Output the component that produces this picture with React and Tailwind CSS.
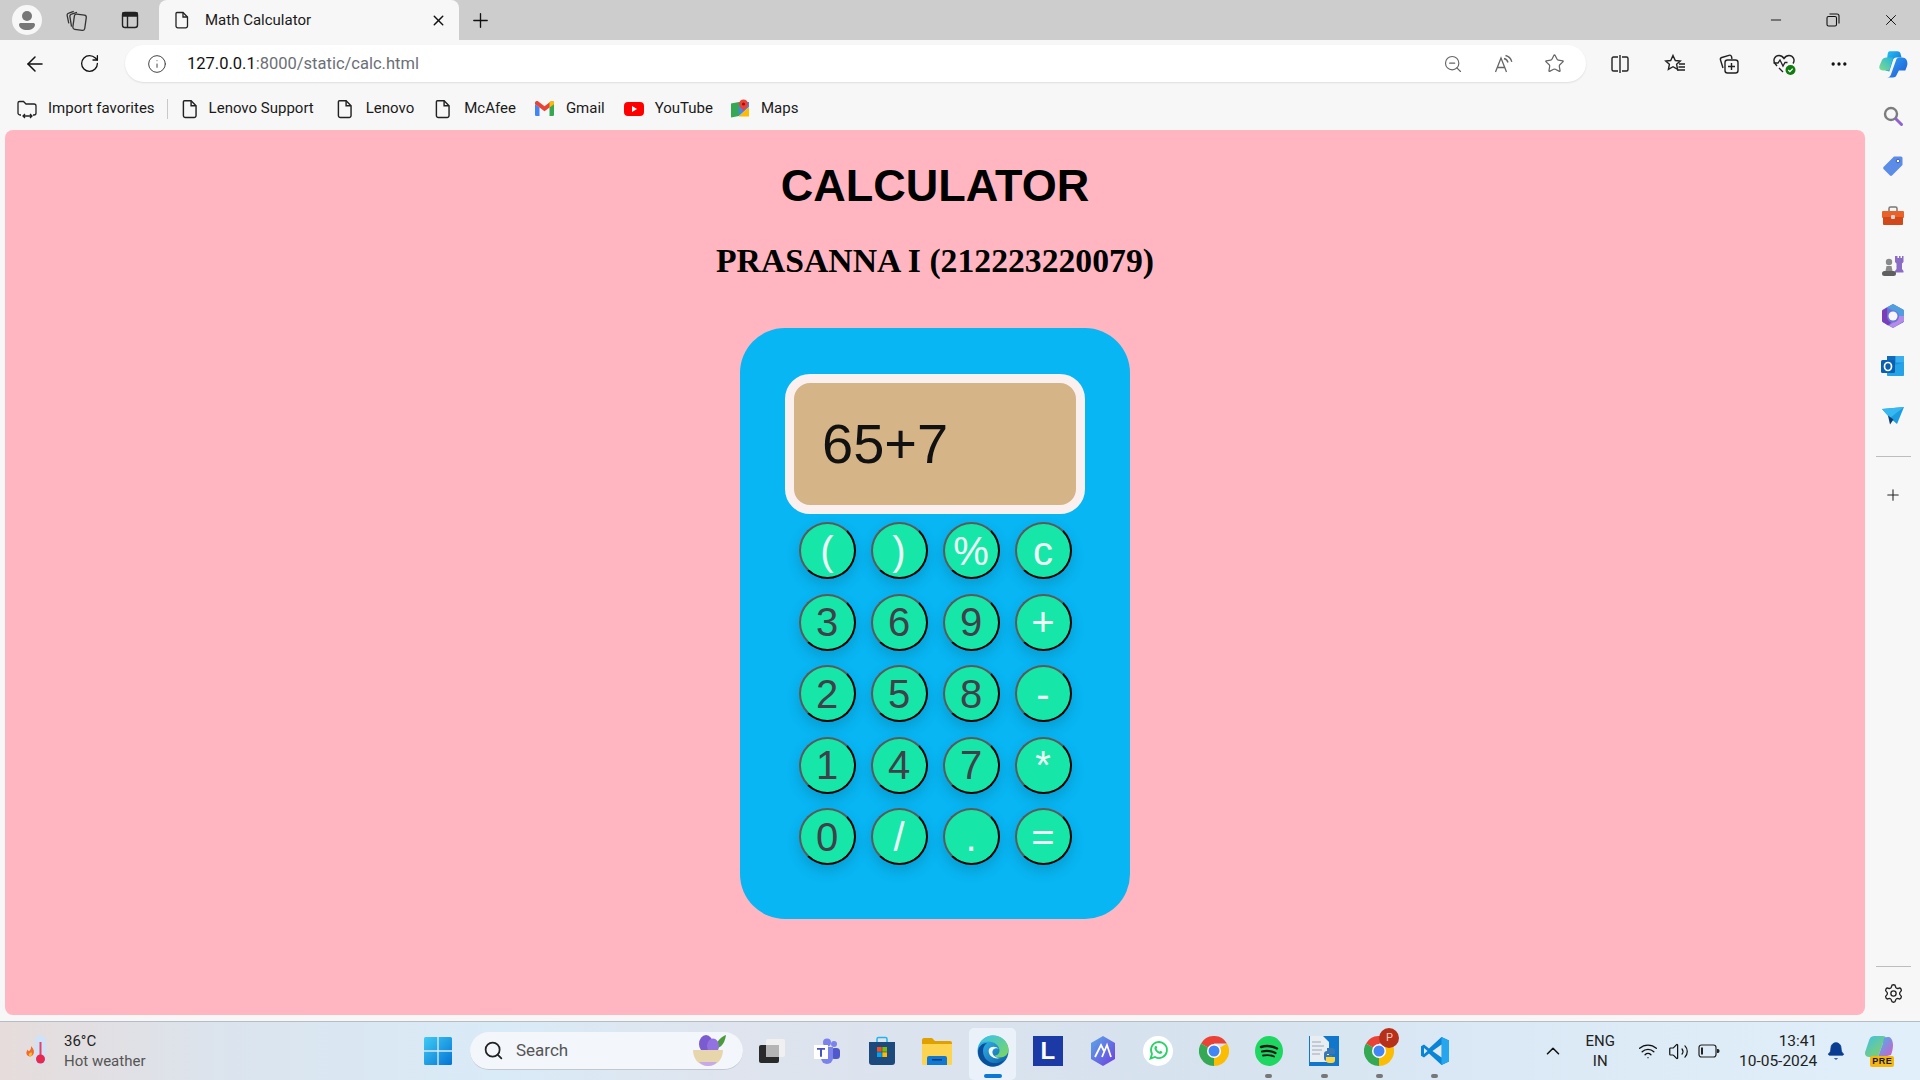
import React from "react";
import { ArrowLeft, RotateCw, Info, ZoomOut, Star, X, Plus, Minus, Settings, Search, ChevronUp, Wifi, Volume2, Bell, MoreHorizontal } from "lucide-react";

const ui = { fontFamily: "Roboto, 'Noto Sans', sans-serif" };

function Slot({ className = "", children }) {
  return <div className={`flex shrink-0 items-center justify-center ${className}`}>{children}</div>;
}

const PageIcon = ({ size = 22 }) => (
  <svg width={size} height={size} viewBox="0 0 20 20" fill="none" stroke="#222" strokeWidth="1.3">
    <path d="M5 2.500h6l4.500 4.500v9a1.800 1.800 0 0 1-1.800 1.800H5.800A1.800 1.800 0 0 1 4 16V3.500a1 1 0 0 1 1-1Z" />
    <path d="M11 2.500V7h4.500" />
  </svg>
);

const Profile = () => (
  <svg width="30" height="30" viewBox="0 0 30 30">
    <circle cx="15" cy="15" r="15" fill="#f7f7f7" />
    <circle cx="15" cy="11" r="5" fill="#777" />
    <path d="M7 19.500c0-1 1-1.500 2-1.500h12c1 0 2 .5 2 1.500 0 3.500-3.500 5.500-8 5.500s-8-2-8-5.500Z" fill="#777" />
  </svg>
);

const TabsIcon = () => (
  <svg width="24" height="24" viewBox="0 0 22 22" fill="none" stroke="#333" strokeWidth="1.200">
    <rect x="8" y="6" width="11" height="14" rx="2" transform="rotate(8 13 12)" />
    <path d="M6 17 4.500 8a2 2 0 0 1 1.500-2.400L11 4" />
    <path d="M3.500 14 2 7a2 2 0 0 1 1.500-2.400L8 3" />
  </svg>
);

const VerticalTabs = () => (
  <svg width="20" height="20" viewBox="0 0 20 20" fill="none" stroke="#222" strokeWidth="1.400">
    <rect x="2.500" y="2.500" width="15" height="15" rx="2.500" />
    <path d="M3 3h14v3H3Z" fill="#222" />
    <path d="M7.500 6v11" />
  </svg>
);

const Restore = () => (
  <svg width="14" height="14" viewBox="0 0 14 14" fill="none" stroke="#111" strokeWidth="1.100">
    <rect x="1" y="3.500" width="9.500" height="9.500" rx="1.500" />
    <path d="M3.500 1h7.500a2 2 0 0 1 2 2v7.500" />
  </svg>
);

const ReadAloud = () => (
  <svg width="22" height="22" viewBox="0 0 22 22" fill="none" stroke="#666" strokeWidth="1.300">
    <path d="M2.500 19 8 5l5.500 14M4.500 14.500h7" />
    <path d="M11 5.500c2 .5 3.500 2 4 4M12.500 2.500c3.200.8 5.500 3.200 6.300 6.300" />
  </svg>
);

const SplitIcon = () => (
  <svg width="22" height="22" viewBox="0 0 22 22" fill="none" stroke="#222" strokeWidth="1.400">
    <path d="M9 4H4.500A1.500 1.500 0 0 0 3 5.500v11A1.500 1.500 0 0 0 4.500 18H9M13 4h4.500A1.500 1.500 0 0 1 19 5.500v11a1.500 1.500 0 0 1-1.500 1.500H13M11 2v18" />
  </svg>
);

const FavList = () => (
  <svg width="24" height="24" viewBox="0 0 24 24" fill="none" stroke="#222" strokeWidth="1.400">
    <path d="M10 3.500 12.300 8.500l5 .5-3.700 3.300 1 5-4.600-2.600-4.600 2.600 1-5L2.700 9l5-.5Z" />
    <path d="M16 12h6M15.500 15h6.500M14 18h8" />
  </svg>
);

const CollectionsAdd = () => (
  <svg width="24" height="24" viewBox="0 0 24 24" fill="none" stroke="#222" strokeWidth="1.400">
    <path d="M6 16 3.500 8a2 2 0 0 1 1.300-2.500L12 3.300a2 2 0 0 1 2.500 1.200L15 7" />
    <rect x="8" y="8" width="13" height="13" rx="2.500" />
    <path d="M14.500 11v7M11 14.500h7" />
  </svg>
);

const HeartCheck = () => (
  <svg width="26" height="26" viewBox="0 0 26 26" fill="none">
    <path d="M6 15 4 12.500C1.500 9 4 4.500 8 4.500c2.200 0 3.800 1.200 5 3 1.200-1.800 2.800-3 5-3 4 0 6.500 4.500 4 8" stroke="#222" strokeWidth="1.400" />
    <path d="M2.500 12h4.500l2-3 3 6 2-3.500h2.500M8 17l4 4" stroke="#222" strokeWidth="1.300" />
    <circle cx="19.500" cy="19" r="5" fill="#107c10" />
    <path d="m17.300 19 1.600 1.600 2.800-3" stroke="#fff" strokeWidth="1.300" />
  </svg>
);

const Copilot = ({ size = 30 }) => (
  <svg width={size} height={size} viewBox="0 0 28 28">
    <defs>
      <linearGradient id="cpa" x1="0" y1="0" x2="1" y2="1"><stop offset="0" stopColor="#27c4f5" /><stop offset="1" stopColor="#0b62d6" /></linearGradient>
      <linearGradient id="cpb" x1="0" y1="1" x2="1" y2="0"><stop offset="0" stopColor="#7fdc8c" /><stop offset="1" stopColor="#25b7d9" /></linearGradient>
      <linearGradient id="cpc" x1="0" y1="0" x2="1" y2="1"><stop offset="0" stopColor="#2aa7f0" /><stop offset="1" stopColor="#2456d8" /></linearGradient>
    </defs>
    <path d="M11 2h7c1.500 0 2.600.8 3 2.200l1 3.800h-5c-1.500 0-2.500.8-3 2.300L10.500 21 7 20 9 5c.2-1.800.6-3 2-3Z" fill="url(#cpa)" />
    <path d="M8 8h6l-3.500 12H4.500C2 20 .5 18 1.500 15.500l2-4.800C4.200 9 6 8 8 8Z" fill="url(#cpb)" />
    <path d="M20 8h2.500c2 0 3.800 1 4.500 3 .6 2 .6 3.500 0 5l-1.500 4h-6L17 25c-.5 1-1.500 1.500-3 1.500H8.500c1.800 0 3-1 3.500-2.500l5-14c.4-1 1.500-2 3-2Z" fill="url(#cpc)" />
  </svg>
);

const ImportFav = () => (
  <svg width="22" height="22" viewBox="0 0 22 22" fill="none" stroke="#222" strokeWidth="1.300">
    <path d="M5 17H4a2 2 0 0 1-2-2V5a1.500 1.500 0 0 1 1.500-1.500h4L10 6h8a2 2 0 0 1 2 2v7a2 2 0 0 1-2 2h-1" />
    <path d="M7 18h9M9 16l-2 2 2 2M14 16l2 2-2 2" />
  </svg>
);

const Gmail = () => (
  <svg width="19" height="15" viewBox="0 0 19 15">
    <path d="M0 3 4.500 6.500V15H1.300A1.300 1.300 0 0 1 0 13.700Z" fill="#4285f4" />
    <path d="M14.500 6.500 19 3v10.700a1.300 1.300 0 0 1-1.300 1.300h-3.200Z" fill="#34a853" />
    <path d="M0 1.800C0 .3 1.800-.6 3 .3l6.500 5 6.500-5c1.200-.9 3-.1 3 1.500V3l-4.500 3.500L9.500 10.300 4.500 6.500 0 3Z" fill="#ea4335" />
    <path d="M14.500 1.500 16 .3c1.200-.9 3-.1 3 1.500V3l-4.500 3.500Z" fill="#fbbc04" />
  </svg>
);

const YouTube = () => (
  <svg width="20" height="14" viewBox="0 0 20 14">
    <rect width="20" height="14" rx="4" fill="#f00" />
    <path d="m8 4 5 3-5 3Z" fill="#fff" />
  </svg>
);

const Maps = () => (
  <svg width="20" height="20" viewBox="0 0 20 20">
    <path d="M1 4.500 9 3v14l-8 1.500Z" fill="#34a853" />
    <path d="M9 3l10 0v5L9 17Z" fill="#4285f4" />
    <path d="M9 17 19 8v9.500H9Z" fill="#fbbc04" />
    <circle cx="13.500" cy="5" r="4.500" fill="#ea4335" />
    <circle cx="13.500" cy="5" r="1.600" fill="#a50e0e" />
    <path d="M10 7.500 13.500 12 17 7.500Z" fill="#ea4335" />
  </svg>
);

const SideSearch = () => (
  <svg width="22" height="22" viewBox="0 0 22 22" fill="none">
    <circle cx="9" cy="9" r="6" stroke="#7c7c7c" strokeWidth="2.400" />
    <path d="m14 14 5.500 5.500" stroke="#8e63ce" strokeWidth="3" strokeLinecap="round" />
  </svg>
);

const SideTag = () => (
  <svg width="22" height="22" viewBox="0 0 22 22">
    <path d="M12 1.500h7a1.500 1.500 0 0 1 1.500 1.500v7L10 20.500a1.500 1.500 0 0 1-2 0L1.500 14a1.500 1.500 0 0 1 0-2Z" fill="#5b8ce8" />
    <circle cx="16" cy="6" r="1.800" fill="#fff" stroke="#3a5fc0" />
  </svg>
);

const SideBox = () => (
  <svg width="24" height="22" viewBox="0 0 24 22">
    <path d="M8 6V3.500A1.500 1.500 0 0 1 9.500 2h5A1.500 1.500 0 0 1 16 3.500V6" stroke="#777" strokeWidth="1.500" fill="none" />
    <rect x="1" y="6" width="22" height="7" rx="1" fill="#e8622a" />
    <rect x="2" y="12" width="20" height="8" rx="1" fill="#d1491a" />
    <rect x="10" y="10" width="4" height="4" rx="1" fill="#d5d5d5" />
  </svg>
);

const SideChess = () => (
  <svg width="24" height="24" viewBox="0 0 24 24">
    <path d="M15 2h1.500v2H18V2h1.500v2H21V2h1.500v6l-1.500 1.500V15l1.500 2v1.500H14V17l1.500-2V9.500L14 8V2Z" fill="#8b6cc5" />
    <circle cx="8" cy="8" r="3.200" fill="#8a8a8a" />
    <path d="M5.500 12h5l1 5h-7Z" fill="#8a8a8a" />
    <rect x="1" y="17" width="14" height="5" rx="2.500" fill="#5f5f5f" />
  </svg>
);

const SideM365 = () => (
  <svg width="24" height="26" viewBox="0 0 24 26">
    <path d="M12 1 22 6.500c1 .6 1 1 1 2v9c0 1 0 1.400-1 2L12 25 2 19.500c-1-.6-1-1-1-2v-9c0-1 0-1.400 1-2Z" fill="#6e73d8" />
    <path d="M12 1 22 6.500c1 .6 1 1 1 2V13h-5c0-3-2.500-5.500-6-5.500L6 4.500Z" fill="#4f9fe0" />
    <path d="M1 8v10l6 4.500 3-3C7 18 6 16 6 13c0-2 .5-4 0-8.500Z" fill="#7a3fb8" />
    <path d="M23 13v5l-11 7-4-2.500 4-3c3.500 0 6-2.500 6-6.500Z" fill="#b58ae8" />
    <circle cx="12" cy="13" r="4.500" fill="#f7f7f7" />
  </svg>
);

const SideOutlook = () => (
  <svg width="24" height="22" viewBox="0 0 24 22">
    <rect x="6" y="1" width="17" height="20" rx="1.500" fill="#1a8fdc" />
    <path d="M6 1h8.500v6.500H6Z" fill="#0f6cbd" />
    <path d="M14.500 1H23v6.500h-8.500Z" fill="#38b0f0" />
    <path d="M6 12 23 7.500V19.500a1.500 1.500 0 0 1-1.500 1.500H7.500A1.500 1.500 0 0 1 6 19.500Z" fill="#28a8ea" opacity=".8" />
    <rect x="0" y="5" width="14" height="13" rx="1.500" fill="#0a5fb0" />
    <ellipse cx="7" cy="11.500" rx="3.500" ry="4" fill="none" stroke="#fff" strokeWidth="1.700" />
  </svg>
);

const SidePlane = () => (
  <svg width="24" height="20" viewBox="0 0 24 20">
    <path d="M1 3 23 1 16 18l-7-6Z" fill="#1b9de2" />
    <path d="M1 3l8 9 14-11Z" fill="#37b8f0" />
    <path d="m7 9.500 2 9 3.500-5Z" fill="#0c3c70" />
  </svg>
);

const Thermo = () => (
  <svg width="26" height="36" viewBox="0 0 26 36">
    <path d="M7 13c3 3 3.500 5.500 2.500 8-.7 1.500-2 2.500-3.500 2.500S3 22.500 2.500 21c-.5-2 .5-3.500 1.500-4.500 0 1 .5 1.500 1.200 1.500C6.300 17 7.500 15.500 7 13Z" fill="#ef6c2e" />
    <path d="M7 19c1 1 1.200 2.500.5 3.500-1 1-2.500.5-2.800-.8C4.500 20.500 6.500 20 7 19Z" fill="#fbc02d" />
    <rect x="11" y="2" width="11" height="30" rx="5.500" fill="#cfe2f7" />
    <rect x="15.500" y="9" width="2" height="16" fill="#e8405e" />
    <circle cx="16.500" cy="26" r="4.500" fill="#e8284e" />
  </svg>
);

const WinLogo = () => (
  <svg width="30" height="30" viewBox="0 0 30 30">
    <defs>
      <linearGradient id="win" x1="0" y1="0" x2="1" y2="1"><stop offset="0" stopColor="#3fcbf5" /><stop offset="1" stopColor="#0474d4" /></linearGradient>
    </defs>
    <path d="M1 2.500A1.500 1.500 0 0 1 2.500 1h11.800v13.300H1ZM15.700 1h11.800A1.500 1.500 0 0 1 29 2.500v11.800H15.700ZM1 15.700h13.300V29H2.500A1.500 1.500 0 0 1 1 27.500ZM15.700 15.700H29v11.800a1.500 1.500 0 0 1-1.500 1.500H15.700Z" fill="url(#win)" />
  </svg>
);

const Bowl = () => (
  <svg width="40" height="36" viewBox="0 0 40 36">
    <path d="M26 12c2-5 5-8 10-10-1 6-3 11-8 13Z" fill="#4d9a3e" />
    <ellipse cx="16" cy="11" rx="7" ry="9" fill="#7a5bd0" />
    <ellipse cx="23" cy="13" rx="6" ry="7.500" fill="#9272e0" />
    <path d="M3 17h30c0 9-6 16-15 16S3 26 3 17Z" fill="#e7d5ac" />
    <path d="M9 29c2.500 2.500 5.500 4 9 4s7-1.500 9-4Z" fill="#c7a8ea" />
  </svg>
);

const TaskView = () => (
  <svg width="28" height="28" viewBox="0 0 28 28">
    <rect x="1" y="8" width="20" height="18" rx="2" fill="#2a2a2a" />
    <rect x="8" y="2" width="19" height="18" rx="2" fill="#f0f0f0" />
    <rect x="8" y="8" width="13" height="12" fill="#b5b5b5" />
  </svg>
);

const Teams = () => (
  <svg width="28" height="28" viewBox="0 0 28 28">
    <circle cx="21" cy="7" r="3" fill="#7b83eb" />
    <rect x="18" y="11" width="9" height="11" rx="3.500" fill="#5059c9" />
    <circle cx="14" cy="5.500" r="4" fill="#7b83eb" />
    <path d="M8 10h12v11a6 6 0 0 1-12 0Z" fill="#7b83eb" />
    <rect x="1" y="8" width="14" height="14" fill="#fff" />
    <path d="M4 11h8v1.800H9v7H7v-7H4Z" fill="#4b53bc" />
  </svg>
);

const Store = () => (
  <svg width="28" height="30" viewBox="0 0 28 30">
    <path d="M9 6V3a1.500 1.500 0 0 1 1.500-1.500h7A1.500 1.500 0 0 1 19 3v3" fill="none" stroke="#22b5e8" strokeWidth="1.500" />
    <path d="M1 6h26v20a3 3 0 0 1-3 3H4a3 3 0 0 1-3-3Z" fill="#1c4a7c" />
    <rect x="9" y="11" width="4.700" height="4.700" fill="#f25022" />
    <rect x="14.300" y="11" width="4.700" height="4.700" fill="#7fba00" />
    <rect x="9" y="16.300" width="4.700" height="4.700" fill="#00a4ef" />
    <rect x="14.300" y="16.300" width="4.700" height="4.700" fill="#ffb900" />
  </svg>
);

const Folder = () => (
  <svg width="30" height="28" viewBox="0 0 30 28">
    <path d="M0 3a2 2 0 0 1 2-2h8l3 3h15a2 2 0 0 1 2 2v4H0Z" fill="#e0a100" />
    <path d="M0 7h30v20a1 1 0 0 1-1 1H1a1 1 0 0 1-1-1Z" fill="#fdd44f" />
    <path d="M5 28v-7a2 2 0 0 1 2-2h16a2 2 0 0 1 2 2v7Z" fill="#0f78d4" />
    <rect x="10" y="22" width="10" height="1.500" fill="#083b70" />
  </svg>
);

const Edge = () => (
  <svg width="32" height="32" viewBox="0 0 32 32">
    <defs>
      <linearGradient id="eda" x1="0" y1="0" x2="1" y2="1"><stop offset="0" stopColor="#35c1f1" /><stop offset="1" stopColor="#0c59a4" /></linearGradient>
      <linearGradient id="edb" x1="0" y1="0" x2="1" y2="1"><stop offset="0" stopColor="#35c1f1" /><stop offset="1" stopColor="#7fd858" /></linearGradient>
    </defs>
    <circle cx="16" cy="16" r="15.500" fill="url(#eda)" />
    <path d="M3 8c3-5 8-7.500 13-7.500 8 0 15.500 6 15.500 14 0 5-4 8-8.500 8-3 0-5-1-5.500-2 2 0 5-1 5-5 0-5-5-9-11-9-3.500 0-6.500 1-8.500 1.500Z" fill="url(#edb)" />
    <path d="M10 30c-5-2-9-7-9-13 0-5 4-9 9-9-3 2-4 5-4 8 0 6 4 11 10 12 4 .6 8-.5 11-3-3 5-9 7-13 6.500-1.500-.2-3-.8-4-1.500Z" fill="#0a4e9c" />
    <path d="M12 14c2-3 7-3 10 0-1-1-5-1-6 1-2 3 1 8 7 8-6 2-13-3-11-9Z" fill="#f4f8fb" />
  </svg>
);

const LIcon = () => (
  <div className="flex h-[30px] w-[30px] items-center justify-center bg-[#1b3aa6]">
    <span className="text-[24px] font-bold leading-none text-white" style={{ fontFamily: "'Liberation Sans', sans-serif" }}>L</span>
  </div>
);

const Arc = () => (
  <svg width="28" height="32" viewBox="0 0 28 32" fill="none">
    <defs>
      <linearGradient id="arc" x1="0" y1="0" x2="1" y2="1"><stop offset="0" stopColor="#5aa9e6" /><stop offset="1" stopColor="#6d3fe0" /></linearGradient>
    </defs>
    <path d="M14 1 26 8v16l-12 7-12-7V8Z" fill="url(#arc)" />
    <path d="m6 22 6-12 3 6M13 22l5-12 4 12" stroke="#fff" strokeWidth="1.800" />
  </svg>
);

const WhatsApp = () => (
  <svg width="30" height="30" viewBox="0 0 30 30" fill="none">
    <circle cx="15" cy="15" r="15" fill="#fff" />
    <path d="M7.500 22.500 9 18a8 8 0 1 1 3 3Z" stroke="#25d366" strokeWidth="1.800" />
    <path d="M12 10.500c-1 1-.8 3 1 5s4 2.800 5.500 2c1-.5 1-1.500.8-1.800l-2-1-.8 1c-1-.3-2.500-1.700-3-3l.8-.9-.9-2c-.4-.2-1-.2-1.400.7Z" fill="#25d366" />
  </svg>
);

const Chrome = () => (
  <svg width="30" height="30" viewBox="0 0 30 30">
    <path d="M15 15 2 7.500A15 15 0 0 1 28 7.500H15Z" fill="#ea4335" />
    <path d="M15 15 28 7.500A15 15 0 0 1 15 30Z" fill="#fbbc04" />
    <path d="M15 15V30A15 15 0 0 1 2 7.500Z" fill="#34a853" />
    <circle cx="15" cy="15" r="7" fill="#fff" />
    <circle cx="15" cy="15" r="5.500" fill="#4285f4" />
  </svg>
);

const Spotify = () => (
  <svg width="28" height="30" viewBox="0 0 28 30" fill="none" stroke="#1a1a1a" strokeLinecap="round">
    <ellipse cx="14" cy="15" rx="14" ry="15" fill="#1ed760" stroke="none" />
    <path d="M6 11c5-1.500 11-1 16 1.500" strokeWidth="2.500" />
    <path d="M7 15.500c4.500-1 9.500-.5 13.500 1.500" strokeWidth="2.200" />
    <path d="M8 19.500c4-.8 8-.5 11 1" strokeWidth="1.800" />
  </svg>
);

const PyFile = () => (
  <svg width="30" height="30" viewBox="0 0 30 30">
    <rect width="30" height="30" fill="#1177cc" />
    <path d="M1 0h13l6 6v20H1Z" fill="#e8edf2" />
    <path d="M3 6h9M3 10h12M3 14h10M3 18h8" stroke="#b5c0cc" strokeWidth="1.500" />
    <path d="M18 12h5a3 3 0 0 1 3 3v3h-8v1h5v3a3 3 0 0 1-3 3h-2a3 3 0 0 1-3-3v-4a3 3 0 0 1 3-3Z" fill="#3a78b5" />
    <path d="M17 21h9v3a3 3 0 0 1-3 3h-3a3 3 0 0 1-3-3Z" fill="#ffd43b" />
  </svg>
);

const VsCode = () => (
  <svg width="30" height="30" viewBox="0 0 30 30">
    <path d="M21.500 1 29 4.500v21L21.500 29 9 17.500l-5 4-3-1.700v-9.600l3-1.700 5 4Z" fill="#0a84d6" />
    <path d="M21.500 1 29 4.500v21L21.500 29Z" fill="#25a6ee" />
    <path d="M21.500 8.500 12.500 15l9 6.500Z" fill="#dfeaf3" />
    <path d="M4 12l3.500 3L4 18Z" fill="#dfeaf3" />
  </svg>
);

const Battery = () => (
  <svg width="22" height="14" viewBox="0 0 22 14" fill="none" stroke="#222" strokeWidth="1.200">
    <rect x="1" y="1" width="17" height="12" rx="2.500" />
    <rect x="3" y="3.500" width="2" height="7" fill="#222" stroke="none" />
    <path d="M19.500 5.500c1 0 1.500.5 1.500 1.500s-.5 1.500-1.500 1.500Z" fill="#222" />
  </svg>
);

const CopilotPre = () => (
  <div className="relative h-[32px] w-[32px]">
    <svg width="30" height="26" viewBox="0 0 30 26">
      <defs>
        <linearGradient id="cp2" x1="0" y1="0" x2="1" y2="1"><stop offset="0" stopColor="#3fb8ee" /><stop offset="1" stopColor="#d45cc8" /></linearGradient>
        <linearGradient id="cp3" x1="0" y1="0" x2="1" y2="1"><stop offset="0" stopColor="#3fc0e8" /><stop offset="1" stopColor="#8fd44c" /></linearGradient>
      </defs>
      <path d="M10 1h9c2 0 3 1 3.500 2.500L24 8h-5L14 22H5C2 22 0 19 1.500 16l3-9C5.500 3 7 1 10 1Z" fill="url(#cp3)" />
      <path d="M20 3c1.500-1 3-1 5-1 3 1 4 5 4 8s-1 8-2 10l-8 2H14l5-14c.5-2 .5-4 1-5Z" fill="url(#cp2)" />
    </svg>
    <span className="absolute bottom-0 left-[6px] rounded-[2px] bg-[#f5b70f] px-[2px] text-[9px] font-bold leading-[11px] tracking-[0.5px] text-[#1a1a1a]" style={{ fontFamily: "'Liberation Sans', sans-serif" }}>PRE</span>
  </div>
);

const bookmarks = [
  { icon: <ImportFav />, label: "Import favorites", slot: "w-[48px] pl-[6px]", gap: "w-[12px]" },
  { icon: <PageIcon />, label: "Lenovo Support", slot: "w-[41px] pl-[3px]", gap: "w-[10px]", sep: true },
  { icon: <PageIcon />, label: "Lenovo", slot: "w-[42px]", gap: "w-[8px]" },
  { icon: <PageIcon />, label: "McAfee", slot: "w-[42px]", gap: "w-[8px]" },
  { icon: <Gmail />, label: "Gmail", slot: "w-[42px]", gap: "w-[8px]" },
  { icon: <YouTube />, label: "YouTube", slot: "w-[42px]", gap: "w-[6px]" },
  { icon: <Maps />, label: "Maps", slot: "w-[42px]", gap: "w-0" },
];

const keys = [
  ["(", 0], [")", 0], ["%", 0], ["c", 0],
  ["3", 1], ["6", 1], ["9", 1], ["+", 0],
  ["2", 1], ["5", 1], ["8", 1], ["-", 0],
  ["1", 1], ["4", 1], ["7", 1], ["*", 0],
  ["0", 1], ["/", 0], [".", 0], ["=", 0],
];

const sideIcons = [<SideSearch />, <SideTag />, <SideBox />, <SideChess />, <SideM365 />, <SideOutlook />, <SidePlane />];

const taskIcons = [
  { icon: <TaskView /> },
  { icon: <Teams /> },
  { icon: <Store /> },
  { icon: <Folder /> },
  { icon: <Edge />, active: true },
  { icon: <LIcon /> },
  { icon: <Arc /> },
  { icon: <WhatsApp /> },
  { icon: <Chrome /> },
  { icon: <Spotify />, dot: true },
  { icon: <PyFile />, dot: true },
  {
    icon: (
      <div className="relative">
        <Chrome />
        <span className="absolute -right-[5px] -top-[8px] flex h-[20px] w-[20px] items-center justify-center rounded-full bg-[#b7301a] text-[11px] text-[#f7c9b8]">P</span>
      </div>
    ),
    dot: true,
  },
  { icon: <VsCode />, dot: true },
];

export default function App() {
  return (
    <div className="flex h-[1080px] w-[1920px] flex-col overflow-hidden bg-[#f7f7f7] text-[#1a1a1a]" style={ui}>
      {/* tab strip */}
      <div className="flex h-[40px] shrink-0 items-center bg-[#cdcdcd]">
        <Slot className="w-[54px]"><Profile /></Slot>
        <Slot className="w-[46px]"><TabsIcon /></Slot>
        <Slot className="w-[59px]"><VerticalTabs /></Slot>
        <div className="flex h-[40px] w-[300px] shrink-0 items-center rounded-t-[8px] bg-[#f7f7f7]">
          <Slot className="ml-[13px] w-[20px]"><PageIcon /></Slot>
          <span className="ml-[13px] flex-1 text-[15px]">Math Calculator</span>
          <X size={17} strokeWidth={2} className="mr-[12px] text-[#111]" />
        </div>
        <Slot className="w-[42px]"><Plus size={23} strokeWidth={1.4} className="text-[#111]" /></Slot>
        <div className="flex-1" />
        <Slot className="w-[57px]"><Minus size={16} strokeWidth={1.4} className="text-[#111]" /></Slot>
        <Slot className="w-[58px]"><Restore /></Slot>
        <Slot className="w-[58px]"><X size={18} strokeWidth={1.3} className="text-[#111]" /></Slot>
      </div>

      {/* toolbar */}
      <div className="flex h-[47px] shrink-0 items-center">
        <Slot className="w-[69px]"><ArrowLeft size={24} strokeWidth={1.5} className="text-[#111]" /></Slot>
        <Slot className="w-[41px]"><RotateCw size={21} strokeWidth={1.5} className="text-[#111]" /></Slot>
        <div className="ml-[15px] flex h-[37px] w-[1461px] shrink-0 items-center rounded-full bg-white shadow-[0_1px_2px_rgba(0,0,0,0.1)]">
          <Slot className="ml-[21px] w-[22px]"><Info size={20} strokeWidth={1.2} className="text-[#444]" /></Slot>
          <div className="ml-[19px] flex-1 pt-[2px] text-[16.5px]">
            <span className="text-[#111]">127.0.0.1</span>
            <span className="text-[#6b6f76]">:8000/static/calc.html</span>
          </div>
          <Slot className="w-[51px]"><ZoomOut size={20} strokeWidth={1.4} className="text-[#666]" /></Slot>
          <Slot className="w-[51px]"><ReadAloud /></Slot>
          <Slot className="mr-[7px] w-[50px]"><Star size={21} strokeWidth={1.4} className="text-[#666]" /></Slot>
        </div>
        <Slot className="ml-[7px] w-[54.6px]"><SplitIcon /></Slot>
        <Slot className="w-[54.6px]"><FavList /></Slot>
        <Slot className="w-[54.6px]"><CollectionsAdd /></Slot>
        <Slot className="w-[54.6px]"><HeartCheck /></Slot>
        <Slot className="w-[54.6px]"><MoreHorizontal size={20} className="text-[#111]" /></Slot>
        <Slot className="w-[54.6px]"><Copilot /></Slot>
      </div>

      <div className="flex min-h-0 flex-1">
        <div className="flex w-[1866px] shrink-0 flex-col">
          {/* favorites bar */}
          <div className="flex h-[43px] shrink-0 items-center text-[15px]">
            {bookmarks.map((b) => (
              <React.Fragment key={b.label}>
                {b.sep && <div className="h-[20px] w-px shrink-0 bg-[#c9c9c9]" />}
                <div className="flex shrink-0 items-center">
                  <Slot className={b.slot}>{b.icon}</Slot>
                  <span>{b.label}</span>
                </div>
                <div className={`shrink-0 ${b.gap}`} />
              </React.Fragment>
            ))}
          </div>

          {/* page */}
          <div className="mb-[6px] ml-[5px] mr-[1px] flex flex-1 flex-col items-center rounded-[8px] bg-[#ffb6c1] pt-[33px] text-black">
            <h1 className="text-[45px] font-bold leading-[45px]" style={{ fontFamily: "'Liberation Sans', Arial, sans-serif" }}>CALCULATOR</h1>
            <h2 className="mt-[36px] text-[33.7px] font-bold leading-[34px]" style={{ fontFamily: "'Liberation Serif', 'Times New Roman', serif" }}>PRASANNA I (212223220079)</h2>
            <div className="mt-[50px] flex h-[591px] w-[390px] flex-col items-center rounded-[45px] bg-[#08b6f3] pt-[46px]" style={{ fontFamily: "'Liberation Sans', Arial, sans-serif" }}>
              <div className="flex h-[140px] w-[300px] items-center rounded-[25px] border-[9px] border-[#fbf0f0] bg-[#d5b587] pl-[28px] text-[56px] text-[#111]">65+7</div>
              <div className="mt-[8px] grid grid-cols-[repeat(4,57px)] gap-x-[15px] gap-y-[14.6px]">
                {keys.map(([k, dark]) => (
                  <button
                    key={k}
                    className={`flex h-[57px] w-[57px] items-center justify-center rounded-full border-2 border-t-[#5a5a5a] border-r-black border-b-black border-l-[#5a5a5a] bg-[#16e7a9] text-[40px] leading-none shadow-[0_6px_14px_rgba(0,0,0,0.15)] ${dark ? "text-[#404048]" : "text-[#f0fff5]"}`}
                  >
                    {k}
                  </button>
                ))}
              </div>
            </div>
          </div>
        </div>

        {/* edge sidebar */}
        <div className="flex w-[54px] shrink-0 flex-col items-center pt-[4px]">
          {sideIcons.map((icon, i) => (
            <Slot key={i} className="h-[50px] w-full">{icon}</Slot>
          ))}
          <div className="mt-[15px] h-px w-[35px] bg-[#bdbdbd]" />
          <Slot className="h-[76px] w-full"><Plus size={18} strokeWidth={1.4} className="text-[#222]" /></Slot>
          <div className="mt-auto h-px w-[35px] bg-[#bdbdbd]" />
          <Slot className="mb-[2px] h-[52px] w-full"><Settings size={21} strokeWidth={1.5} className="text-[#222]" /></Slot>
        </div>
      </div>

      {/* windows taskbar */}
      <div className="flex h-[59px] shrink-0 items-center border-t border-[#b5bcc5] bg-[linear-gradient(90deg,#e6dcdb_0%,#dbe4ee_12%,#d9ebf7_26%,#dfe4ee_38%,#d6e2ee_60%,#d9e8f4_75%,#e0eff9_100%)]">
        <Slot className="ml-[22px] w-[30px]"><Thermo /></Slot>
        <div className="ml-[12px] w-[355px] text-[15px] leading-[20px]">
          <div className="text-[#222]">36°C</div>
          <div className="text-[#555]">Hot weather</div>
        </div>
        <Slot className="w-[38px]"><WinLogo /></Slot>
        <div className="ml-[13px] flex h-[38px] w-[273px] shrink-0 items-center rounded-full border-b border-[#c2c8d0] bg-[#f3f6fb]">
          <Search size={21} strokeWidth={2} className="ml-[13px] text-[#222]" />
          <span className="ml-[12px] flex-1 text-[17px] text-[#555]">Search</span>
          <span className="mr-[13px] flex"><Bowl /></span>
        </div>
        <div className="flex items-center pl-[1px]">
          {taskIcons.map((t, i) => (
            <Slot key={i} className="relative h-[59px] w-[55.25px]">
              {t.active && <div className="absolute inset-x-[4px] top-[6px] bottom-[1px] rounded-[5px] bg-[#eaf1f9]" />}
              <div className="relative">{t.icon}</div>
              {t.active && <div className="absolute bottom-[3px] h-[4px] w-[18px] rounded-full bg-[#0a78d4]" />}
              {t.dot && <div className="absolute bottom-[3px] h-[4px] w-[7px] rounded-full bg-[#777]" />}
            </Slot>
          ))}
        </div>
        <Slot className="ml-[77px] w-[28px]"><ChevronUp size={22} strokeWidth={1.7} className="text-[#111]" /></Slot>
        <div className="ml-[14px] w-[38px] text-center text-[15px] leading-[20px] text-[#222]">
          <div>ENG</div>
          <div>IN</div>
        </div>
        <Slot className="ml-[14px] w-[30px]"><Wifi size={20} strokeWidth={1.6} className="text-[#111]" /></Slot>
        <Slot className="w-[30px]"><Volume2 size={21} strokeWidth={1.4} className="text-[#111]" /></Slot>
        <Slot className="w-[32px]"><Battery /></Slot>
        <div className="w-[92px] text-right text-[15.5px] leading-[20px] text-[#222]">
          <div>13:41</div>
          <div>10-05-2024</div>
        </div>
        <Slot className="ml-[7px] w-[24px]"><Bell size={20} fill="#0a3d91" strokeWidth={1} className="text-[#0a3d91]" /></Slot>
        <Slot className="ml-[16px] w-[32px]"><CopilotPre /></Slot>
      </div>
    </div>
  );
}
